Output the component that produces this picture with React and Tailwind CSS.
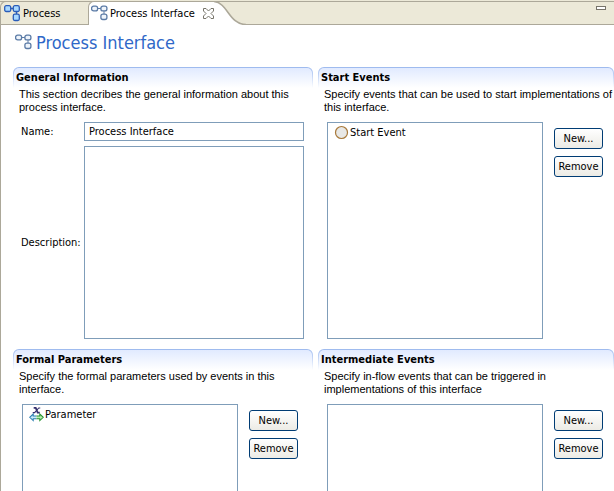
import { useState } from 'react';

const FlowIcon = () => (
  <svg width="17" height="17" viewBox="0 0 17 17" aria-hidden="true" className="shrink-0">
    <path d="M7 3.5h3M13 6v3" stroke="#5b7ba6" fill="none" />
    <rect x="0.6" y="1.1" width="6" height="4.8" rx="2" fill="#eef4fb" stroke="#5b7ba6" strokeWidth="1.3" />
    <rect x="9.9" y="1.1" width="6" height="4.8" rx="2" fill="#eef4fb" stroke="#5b7ba6" strokeWidth="1.3" />
    <rect x="9.9" y="9.1" width="6" height="5.4" rx="2" fill="#eef4fb" stroke="#5b7ba6" strokeWidth="1.3" />
  </svg>
);

const ProcessIcon = () => (
  <svg width="17" height="17" viewBox="0 0 17 17" aria-hidden="true" className="shrink-0">
    <path d="M7 3.5h2M12.5 7v2" stroke="#2a5cb8" strokeWidth="1.4" fill="none" />
    <rect x="0.7" y="0.7" width="6" height="5.8" rx="1.5" fill="#a8d8ff" stroke="#2a5cb8" strokeWidth="1.3" />
    <rect x="9.3" y="0.7" width="6" height="5.8" rx="1.5" fill="#a8d8ff" stroke="#2a5cb8" strokeWidth="1.3" />
    <rect x="9.3" y="9.2" width="6" height="6.3" rx="1.5" fill="#a8d8ff" stroke="#2a5cb8" strokeWidth="1.3" />
  </svg>
);

const EventIcon = () => (
  <svg width="15" height="15" viewBox="0 0 15 15" aria-hidden="true" className="shrink-0">
    <circle cx="7.5" cy="7.5" r="6" fill="#e8e8e6" stroke="#a8793a" strokeWidth="1.2" />
  </svg>
);

const ParameterIcon = () => (
  <svg width="15" height="15" viewBox="0 0 16 16" aria-hidden="true" className="shrink-0">
    <path d="M5 1h2.2l2 5h2.3" fill="none" stroke="#35306e" strokeWidth="1.8" />
    <path d="M12 1h-1.6L6 6H4" fill="none" stroke="#35306e" strokeWidth="1.2" />
    <path d="M8 9.5H4.5V7.5L0.8 11l3.7 3.5v-2H8" fill="#c9ecfa" stroke="#2b7fb0" strokeWidth="1.1" />
    <path d="M8 9.5h3.5V7.5L15.2 11l-3.7 3.5v-2H8" fill="#b9efb0" stroke="#2a9434" strokeWidth="1.1" />
  </svg>
);

const CloseIcon = () => (
  <svg width="11" height="11" viewBox="0 0 11 11" aria-hidden="true">
    <path
      d="M0.5 0.5h2.5L5.5 3L8 0.5h2.5V3L8 5.5L10.5 8v2.5H8L5.5 8L3 10.5H0.5V8L3 5.5L0.5 3z"
      fill="#fff"
      stroke="#77746a"
    />
  </svg>
);

function TabBar() {
  return (
    <div role="tablist" className="mt-px flex h-6 border-y border-[#aca899]">
      <button
        role="tab"
        aria-selected="false"
        className="-mt-px flex h-6 w-[88px] items-center gap-[2px] rounded-tl-md border-t border-l border-[#aca899] pl-[3px]"
      >
        <ProcessIcon />
        Process
      </button>
      <div className="-mt-px flex h-6 items-center rounded-tl-md border-t border-l border-[#aca899] bg-white pl-[2px]">
        <button role="tab" aria-selected="true" className="flex items-center gap-[2px]">
          <FlowIcon />
          Process Interface
        </button>
        <button aria-label="Close" className="ml-2">
          <CloseIcon />
        </button>
      </div>
      <svg width="32" height="24" viewBox="0 0 32 24" aria-hidden="true" className="-mt-px shrink-0">
        <path d="M0 0.5C14 2 15 23.5 32 23.5V24H0z" fill="#fff" />
        <path d="M0 0.5C14 2 15 23.5 32 23.5" fill="none" stroke="#aca899" strokeWidth="1.6" />
        <path d="M0 0.5H32" stroke="#aca899" />
      </svg>
      <button aria-label="Minimize" className="mt-1 mr-2 ml-auto h-1 w-[10px] border border-[#77746a] bg-white" />
    </div>
  );
}

function Section({ title, description, children }) {
  return (
    <section>
      <div className="rounded-t-md bg-linear-to-b from-[#9db9ee] to-white px-px pt-px">
        <h2 className="h-5 rounded-t-[5px] bg-linear-to-b from-[#e1eaff] to-white pl-[2px] text-[11px] leading-5 font-bold">
          {title}
        </h2>
      </div>
      <p className="h-[26px] pl-[6px] font-['Liberation_Sans',Arial,sans-serif]">{description}</p>
      {children}
    </section>
  );
}

function FormButton({ children }) {
  return (
    <button className="h-[21px] w-[49px] rounded-[3px] border border-[#003c74] bg-linear-to-b from-white to-[#ecebe5] text-center">
      {children}
    </button>
  );
}

function EventList({ label, items }) {
  return (
    <div className="mt-2 ml-[9px] flex items-start gap-[11px]">
      <ul aria-label={label} className="h-[217px] w-[216px] border border-[#7f9db9] bg-white pt-[2px]">
        {items.map(({ name, icon }) => (
          <li key={name} className="flex items-center gap-px pl-[6px]">
            {icon}
            {name}
          </li>
        ))}
      </ul>
      <div className="mt-[6px] flex flex-col gap-[7px]">
        <FormButton>New...</FormButton>
        <FormButton>Remove</FormButton>
      </div>
    </div>
  );
}

export default function App() {
  const [name, setName] = useState('Process Interface');
  const [description, setDescription] = useState('');

  return (
    <div className="h-screen overflow-hidden bg-[#ece9d8] font-['DejaVu_Sans_Condensed','DejaVu_Sans',sans-serif] text-[11px] leading-[13px] text-black">
      <TabBar />

      <main className="h-full border-l border-[#aca899] bg-white pl-3">
        <h1 className="flex h-[42px] items-center gap-1 pb-2 pl-[2px] text-[18px] text-[#2f68c8]">
          <FlowIcon />
          Process Interface
        </h1>

        <div className="grid grid-cols-[300fr_296fr] gap-x-[5px] gap-y-[10px]">
          <Section
            title="General Information"
            description="This section decribes the general information about this process interface."
          >
            <form className="mt-2 mr-[9px] ml-2 grid grid-cols-[63px_1fr] items-center gap-y-[5px]">
              <label htmlFor="name">Name:</label>
              <input
                id="name"
                value={name}
                onChange={(e) => setName(e.target.value)}
                className="h-[19px] border border-[#7f9db9] px-1"
              />
              <label htmlFor="description">Description:</label>
              <textarea
                id="description"
                value={description}
                onChange={(e) => setDescription(e.target.value)}
                className="h-[193px] resize-none border border-[#7f9db9] p-1"
              />
            </form>
          </Section>

          <Section
            title="Start Events"
            description="Specify events that can be used to start implementations of this interface."
          >
            <EventList label="Start Events" items={[{ name: 'Start Event', icon: <EventIcon /> }]} />
          </Section>

          <Section
            title="Formal Parameters"
            description="Specify the formal parameters used by events in this interface."
          >
            <EventList label="Formal Parameters" items={[{ name: 'Parameter', icon: <ParameterIcon /> }]} />
          </Section>

          <Section
            title="Intermediate Events"
            description="Specify in-flow events that can be triggered in implementations of this interface"
          >
            <EventList label="Intermediate Events" items={[]} />
          </Section>
        </div>
      </main>
    </div>
  );
}
